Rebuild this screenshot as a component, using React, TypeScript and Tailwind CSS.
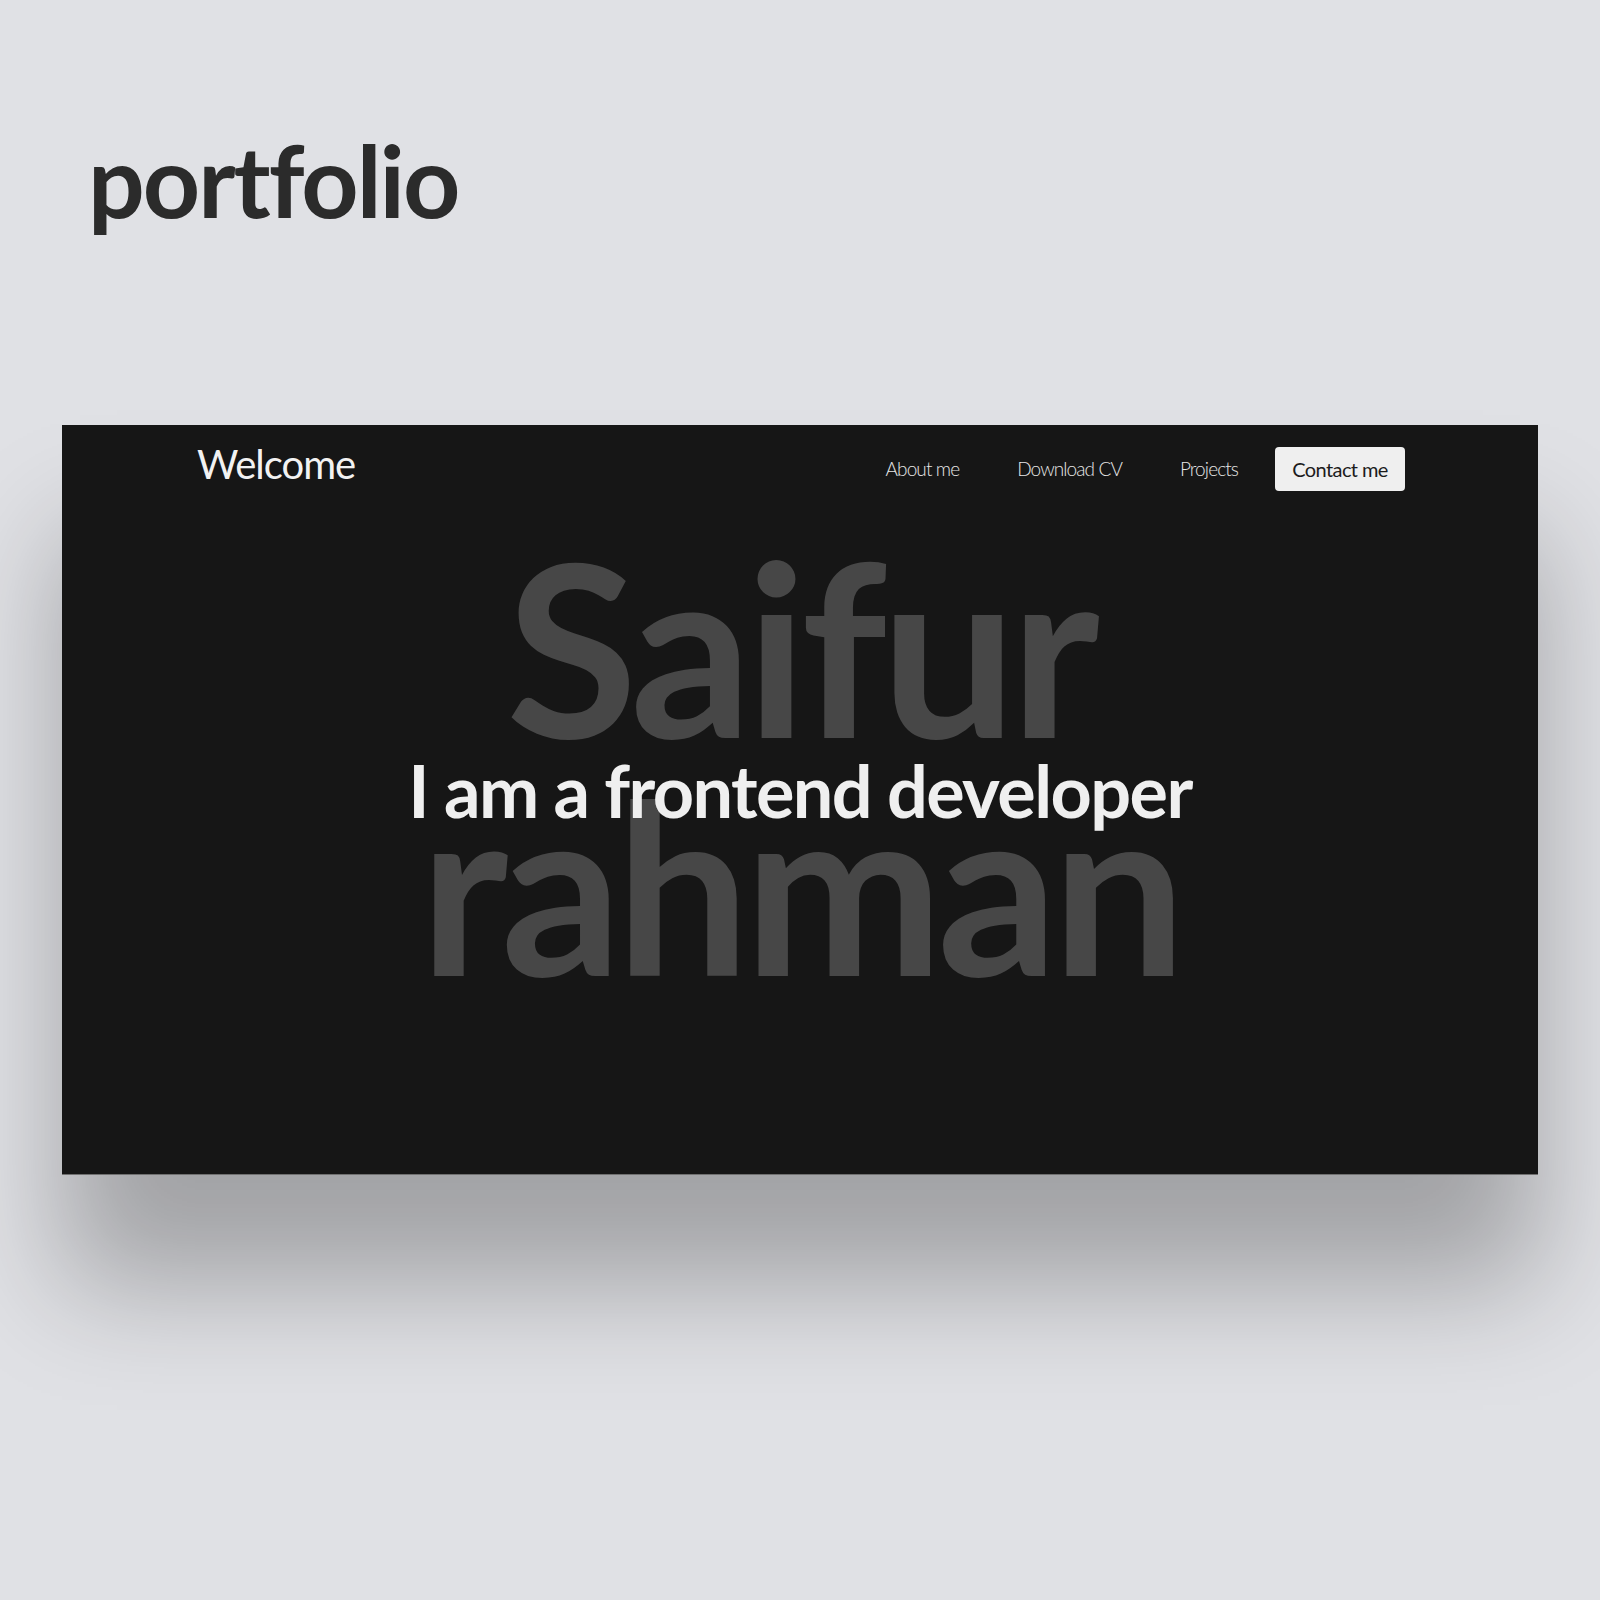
export default function App() {
  const links = ["About me", "Download CV"];

  return (
    <div className="min-h-[1600px] w-full bg-[#e0e1e5] pt-[119px] font-['Lato','Liberation_Sans',sans-serif]">
      <h1 className="pl-[88px] text-[100px] font-bold leading-[120px] tracking-[-2px] text-[#2b2b2b]">
        portfolio
      </h1>

      <section className="mx-[62px] mt-[186px] h-[750px] border-b border-[#707070] bg-[#161616] shadow-[0_110px_110px_rgba(0,0,0,0.28)]">
        <nav className="flex items-center justify-between pl-[135px] pr-[133px] pt-[22px]">
          <span className="-mt-[10px] text-[40px] font-normal leading-none tracking-[-1px] text-[#f2f2f2]">
            Welcome
          </span>
          <div className="flex items-center">
            {links.map((label) => (
              <a
                key={label}
                className="mr-[58px] text-[19px] font-light tracking-[-0.9px] text-[#e6e6e6]"
              >
                {label}
              </a>
            ))}
            <a className="mr-[37px] text-[19px] font-light tracking-[-0.9px] text-[#e6e6e6]">
              Projects
            </a>
            <button className="h-[44px] w-[130px] rounded-[4px] bg-[#efefef] text-[20px] tracking-[-0.6px] text-[#1c1c1c]">
              Contact me
            </button>
          </div>
        </nav>

        <div className="relative mt-[34px] flex flex-col items-center">
          <p className="text-[240px] font-bold leading-[240px] tracking-[-6px] text-[#474747]">
            Saifur
          </p>
          <p className="text-[238px] font-bold leading-[238px] tracking-[-6px] text-[#474747]">
            rahman
          </p>
          <p className="absolute top-[229px] w-full text-center text-[72px] font-bold leading-none tracking-[-1.6px] text-[#efefef]">
            I am a frontend developer
          </p>
        </div>
      </section>
    </div>
  );
}
